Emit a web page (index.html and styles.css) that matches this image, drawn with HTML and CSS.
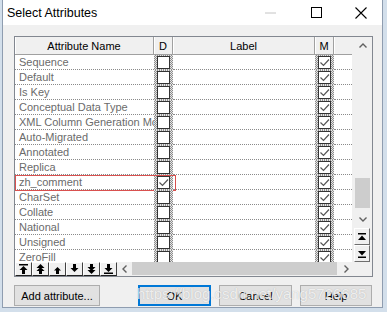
FILE: index.html
```html
<!DOCTYPE html>
<html>
<head>
<meta charset="utf-8">
<link rel="stylesheet" href="styles.css">
</head>
<body>
<div class="dialog">
  <div class="titlebar">
    <span class="title">Select Attributes</span>
    <div class="tb-btn tb-min"><svg width="11" height="2" viewBox="0 0 11 2"><line x1="0" y1="1" x2="11" y2="1" stroke="#c4c4c4" stroke-width="1"/></svg></div>
    <div class="tb-btn tb-max"><svg width="11" height="11" viewBox="0 0 11 11"><rect x="0.5" y="0.5" width="10" height="10" fill="none" stroke="#000" stroke-width="1"/></svg></div>
    <div class="tb-btn tb-close"><svg width="12" height="12" viewBox="0 0 12 12"><path d="M0.5 0.5 L11.5 11.5 M11.5 0.5 L0.5 11.5" stroke="#000" stroke-width="1.1" fill="none"/></svg></div>
  </div>
  <div class="content">
    <div class="grid">
      <div class="grid-main">
        <div class="table">
          <div class="head">
            <div class="hc c-name">Attribute Name</div>
            <div class="hc c-chk">D</div>
            <div class="hc c-label">Label</div>
            <div class="hc c-chk">M</div>
            <div class="hc c-fill"></div>
          </div>
          <div class="body">
            <div class="row"><div class="cell name">Sequence</div><div class="chk"><div class="box"></div></div><div class="cell label"></div><div class="chk"><div class="box on"><svg width="11" height="11" viewBox="0 0 11 11"><polyline points="1.5,5.5 4.5,8.5 10,2.5" fill="none" stroke="#555" stroke-width="1.2"/></svg></div></div><div class="cell fill"></div></div>
            <div class="row"><div class="cell name">Default</div><div class="chk"><div class="box"></div></div><div class="cell label"></div><div class="chk"><div class="box on"><svg width="11" height="11" viewBox="0 0 11 11"><polyline points="1.5,5.5 4.5,8.5 10,2.5" fill="none" stroke="#555" stroke-width="1.2"/></svg></div></div><div class="cell fill"></div></div>
            <div class="row"><div class="cell name">Is Key</div><div class="chk"><div class="box"></div></div><div class="cell label"></div><div class="chk"><div class="box on"><svg width="11" height="11" viewBox="0 0 11 11"><polyline points="1.5,5.5 4.5,8.5 10,2.5" fill="none" stroke="#555" stroke-width="1.2"/></svg></div></div><div class="cell fill"></div></div>
            <div class="row"><div class="cell name">Conceptual Data Type</div><div class="chk"><div class="box"></div></div><div class="cell label"></div><div class="chk"><div class="box on"><svg width="11" height="11" viewBox="0 0 11 11"><polyline points="1.5,5.5 4.5,8.5 10,2.5" fill="none" stroke="#555" stroke-width="1.2"/></svg></div></div><div class="cell fill"></div></div>
            <div class="row"><div class="cell name">XML Column Generation Mode</div><div class="chk"><div class="box"></div></div><div class="cell label"></div><div class="chk"><div class="box on"><svg width="11" height="11" viewBox="0 0 11 11"><polyline points="1.5,5.5 4.5,8.5 10,2.5" fill="none" stroke="#555" stroke-width="1.2"/></svg></div></div><div class="cell fill"></div></div>
            <div class="row"><div class="cell name">Auto-Migrated</div><div class="chk"><div class="box"></div></div><div class="cell label"></div><div class="chk"><div class="box on"><svg width="11" height="11" viewBox="0 0 11 11"><polyline points="1.5,5.5 4.5,8.5 10,2.5" fill="none" stroke="#555" stroke-width="1.2"/></svg></div></div><div class="cell fill"></div></div>
            <div class="row"><div class="cell name">Annotated</div><div class="chk"><div class="box"></div></div><div class="cell label"></div><div class="chk"><div class="box on"><svg width="11" height="11" viewBox="0 0 11 11"><polyline points="1.5,5.5 4.5,8.5 10,2.5" fill="none" stroke="#555" stroke-width="1.2"/></svg></div></div><div class="cell fill"></div></div>
            <div class="row"><div class="cell name">Replica</div><div class="chk"><div class="box"></div></div><div class="cell label"></div><div class="chk"><div class="box on"><svg width="11" height="11" viewBox="0 0 11 11"><polyline points="1.5,5.5 4.5,8.5 10,2.5" fill="none" stroke="#555" stroke-width="1.2"/></svg></div></div><div class="cell fill"></div></div>
            <div class="row"><div class="cell name">zh_comment</div><div class="chk"><div class="box on"><svg width="11" height="11" viewBox="0 0 11 11"><polyline points="1.5,5.5 4.5,8.5 10,2.5" fill="none" stroke="#555" stroke-width="1.2"/></svg></div></div><div class="cell label"></div><div class="chk"><div class="box on"><svg width="11" height="11" viewBox="0 0 11 11"><polyline points="1.5,5.5 4.5,8.5 10,2.5" fill="none" stroke="#555" stroke-width="1.2"/></svg></div></div><div class="cell fill"></div><div class="hl"></div></div>
            <div class="row"><div class="cell name">CharSet</div><div class="chk"><div class="box"></div></div><div class="cell label"></div><div class="chk"><div class="box on"><svg width="11" height="11" viewBox="0 0 11 11"><polyline points="1.5,5.5 4.5,8.5 10,2.5" fill="none" stroke="#555" stroke-width="1.2"/></svg></div></div><div class="cell fill"></div></div>
            <div class="row"><div class="cell name">Collate</div><div class="chk"><div class="box"></div></div><div class="cell label"></div><div class="chk"><div class="box on"><svg width="11" height="11" viewBox="0 0 11 11"><polyline points="1.5,5.5 4.5,8.5 10,2.5" fill="none" stroke="#555" stroke-width="1.2"/></svg></div></div><div class="cell fill"></div></div>
            <div class="row"><div class="cell name">National</div><div class="chk"><div class="box"></div></div><div class="cell label"></div><div class="chk"><div class="box on"><svg width="11" height="11" viewBox="0 0 11 11"><polyline points="1.5,5.5 4.5,8.5 10,2.5" fill="none" stroke="#555" stroke-width="1.2"/></svg></div></div><div class="cell fill"></div></div>
            <div class="row"><div class="cell name">Unsigned</div><div class="chk"><div class="box"></div></div><div class="cell label"></div><div class="chk"><div class="box on"><svg width="11" height="11" viewBox="0 0 11 11"><polyline points="1.5,5.5 4.5,8.5 10,2.5" fill="none" stroke="#555" stroke-width="1.2"/></svg></div></div><div class="cell fill"></div></div>
            <div class="row"><div class="cell name">ZeroFill</div><div class="chk"><div class="box"></div></div><div class="cell label"></div><div class="chk"><div class="box on"><svg width="11" height="11" viewBox="0 0 11 11"><polyline points="1.5,5.5 4.5,8.5 10,2.5" fill="none" stroke="#555" stroke-width="1.2"/></svg></div></div><div class="cell fill"></div></div>
          </div>
        </div>
        <div class="vscroll">
          <div class="varrow"><svg width="8" height="5" viewBox="0 0 8 5"><polyline points="0.5,4.5 4,1 7.5,4.5" fill="none" stroke="#606060" stroke-width="1.4"/></svg></div>
          <div class="vtrack"><div class="vthumb"></div></div>
          <div class="varrow"><svg width="8" height="5" viewBox="0 0 8 5"><polyline points="0.5,0.5 4,4 7.5,0.5" fill="none" stroke="#606060" stroke-width="1.4"/></svg></div>
          <div class="vbtn"><svg width="8" height="8" viewBox="0 0 8 8"><rect x="0" y="0" width="8" height="1.5" fill="#000"/><path d="M4 2.5 L8 7 H0 Z" fill="#000"/></svg></div>
          <div class="vbtn"><svg width="8" height="8" viewBox="0 0 8 8"><path d="M0 1 H8 L4 5.5 Z" fill="#000"/><rect x="0" y="6.5" width="8" height="1.5" fill="#000"/></svg></div>
        </div>
      </div>
      <div class="foot">
        <div class="tool"><svg width="9" height="10" viewBox="0 0 9 10"><rect x="0" y="0" width="9" height="1.5"/><path d="M4.5 2 L8.5 6 H6 V10 H3 V6 H0.5 Z"/></svg></div>
        <div class="tool"><svg width="9" height="10" viewBox="0 0 9 10"><path d="M4.5 0 L8.5 4 H0.5 Z M4.5 3 L8.5 7 H0.5 Z"/><rect x="3" y="7" width="3" height="3"/></svg></div>
        <div class="tool"><svg width="9" height="10" viewBox="0 0 9 10"><path d="M4.5 3 L8 6.5 H6 V10 H3 V6.5 H1 Z"/></svg></div>
        <div class="tool"><svg width="9" height="10" viewBox="0 0 9 10"><path d="M3 0 H6 V4 H8.5 L4.5 8 L0.5 4 H3 Z"/></svg></div>
        <div class="tool"><svg width="9" height="10" viewBox="0 0 9 10" fill="#808080"><rect x="3" y="0" width="3" height="3"/><path d="M0.5 3 H8.5 L4.5 7 Z M0.5 6 H8.5 L4.5 10 Z"/></svg></div>
        <div class="tool"><svg width="9" height="10" viewBox="0 0 9 10"><path d="M3 0 H6 V4 H8.5 L4.5 8 L0.5 4 H3 Z"/><rect x="0" y="8.5" width="9" height="1.5"/></svg></div>
        <div class="hscroll">
          <div class="harrow"><svg width="5" height="8" viewBox="0 0 5 8"><polyline points="4.5,0.5 1,4 4.5,7.5" fill="none" stroke="#606060" stroke-width="1.4"/></svg></div>
          <div class="hthumb"></div>
          <div class="harrow harrow-r"><svg width="5" height="8" viewBox="0 0 5 8"><polyline points="0.5,0.5 4,4 0.5,7.5" fill="none" stroke="#606060" stroke-width="1.4"/></svg></div>
        </div>
        <div class="corner"></div>
      </div>
    </div>
    <div class="buttons">
      <button class="btn btn-add">Add attribute...</button>
      <button class="btn btn-ok">OK</button>
      <button class="btn btn-cancel">Cancel</button>
      <button class="btn btn-help">Help</button>
    </div>
  </div>
  <div class="watermark">https://blog.csdn.net/yang5726685</div>
</div>
</body>
</html>
```

FILE: styles.css
```css
* { box-sizing: border-box; }

body {
  margin: 0;
  width: 387px;
  height: 312px;
  overflow: hidden;
  background: #d3dfeb;
  font-family: "Liberation Sans", Arial, sans-serif;
}

.dialog {
  position: relative;
  margin-left: 2px;
  width: 381px;
  height: 308px;
  border: 1px solid #8f9db0;
  border-top: none;
  background: #f0f0f0;
  display: flex;
  flex-direction: column;
}

.titlebar {
  height: 25px;
  background: #fff;
  display: flex;
  align-items: center;
  padding-left: 4px;
}

.title {
  flex: 1;
  font-size: 12.5px;
  color: #000;
}

.tb-btn {
  height: 25px;
  display: flex;
  align-items: center;
  justify-content: center;
}

.tb-min { width: 46px; }
.tb-max { width: 46px; }
.tb-close { width: 43px; }

.content {
  flex: 1;
  padding: 11px 9px 0 11px;
  display: flex;
  flex-direction: column;
}

.grid {
  width: 359px;
  height: 241px;
  border: 1px solid #828790;
  display: flex;
  flex-direction: column;
  background: #fff;
}

.grid-main {
  display: flex;
  height: 225px;
}

.table {
  width: 337px;
  display: flex;
  flex-direction: column;
}

.head {
  display: flex;
  height: 18px;
  background: #f0f0f0;
  border-bottom: 1px solid #a0a0a0;
  flex-shrink: 0;
}

.hc {
  height: 17px;
  border-right: 1px solid #a0a0a0;
  box-shadow: inset 1px 0 #fff;
  font-size: 11px;
  color: #000;
  display: flex;
  align-items: center;
  justify-content: center;
}

.c-name { width: 139px; }
.c-chk { width: 19px; }
.c-label { width: 142px; }
.c-fill { width: 18px; border-right: none; }

.body {
  flex: 1;
  overflow: hidden;
  background: #fff;
}

.row {
  position: relative;
  display: flex;
  height: 15px;
}

.cell {
  height: 15px;
  border-bottom: 1px dotted #8a8a8a;
}

.name {
  width: 139px;
  padding-left: 4px;
  font-size: 11px;
  line-height: 14px;
  color: #6b6b6b;
  white-space: nowrap;
  overflow: hidden;
}

.label { width: 142px; }
.fill { width: 18px; }

.chk {
  width: 19px;
  height: 15px;
  padding: 1px 0 0 3px;
  background: repeating-conic-gradient(#8c8c8c 0 25%, #e6e6e6 0 50%) 0 0 / 2px 2px;
}

.box {
  width: 13px;
  height: 13px;
  border: 1px solid #333;
  background: #fff;
  display: flex;
  align-items: center;
  justify-content: center;
}

.hl {
  position: absolute;
  left: 0;
  top: 0;
  width: 161px;
  height: 16px;
  border: 1px solid #d9514f;
}

.vscroll {
  width: 20px;
  display: flex;
  flex-direction: column;
  background: #f0f0f0;
}

.varrow {
  height: 17px;
  display: flex;
  align-items: center;
  justify-content: center;
  padding-left: 1px;
}

.vtrack {
  flex: 1;
}

.vthumb {
  margin: 124px 0 0 3px;
  width: 15px;
  height: 30px;
  background: #cdcdcd;
}

.vbtn {
  width: 16px;
  height: 17px;
  margin-left: 2px;
  background: #f0f0f0;
  border: 1px solid;
  border-color: #fff #6e6e6e #6e6e6e #fff;
  box-shadow: 0 0 0 0 transparent;
  display: flex;
  align-items: center;
  justify-content: center;
}

.foot {
  display: flex;
  height: 14px;
  background: #f0f0f0;
}

.tool {
  width: 17px;
  height: 14px;
  background: #f0f0f0;
  border: 1px solid;
  border-color: #fff #404040 #202020 #fff;
  display: flex;
  align-items: center;
  justify-content: center;
}

.tool svg { fill: #000; }

.hscroll {
  width: 238px;
  display: flex;
  background: #f0f0f0;
}

.harrow {
  width: 15px;
  display: flex;
  align-items: center;
  justify-content: center;
}

.harrow-r {
  width: 18px;
}

.hthumb {
  width: 205px;
  height: 13px;
  background: #cdcdcd;
}

.corner {
  flex: 1;
  background: #f0f0f0;
}

.buttons {
  display: flex;
  gap: 8px;
  margin-top: 8px;
  padding-right: 1px;
}

.btn {
  height: 21px;
  margin: 0;
  padding: 0;
  background: #e1e1e1;
  border: 1px solid #adadad;
  font-family: "Liberation Sans", Arial, sans-serif;
  font-size: 11px;
  color: #000;
  display: flex;
  align-items: center;
  justify-content: center;
}

.btn-add { width: 86px; }
.btn-ok { width: 73px; margin-left: auto; border: 2px solid #0078d7; }
.btn-cancel { width: 73px; }
.btn-help { width: 72px; }

.watermark {
  position: absolute;
  left: 134px;
  top: 285px;
  font-size: 15px;
  line-height: 17px;
  color: rgba(255, 255, 255, 0.78);
  text-shadow: 0 0 1px rgba(110, 110, 110, 0.45);
  white-space: nowrap;
  pointer-events: none;
}
```
